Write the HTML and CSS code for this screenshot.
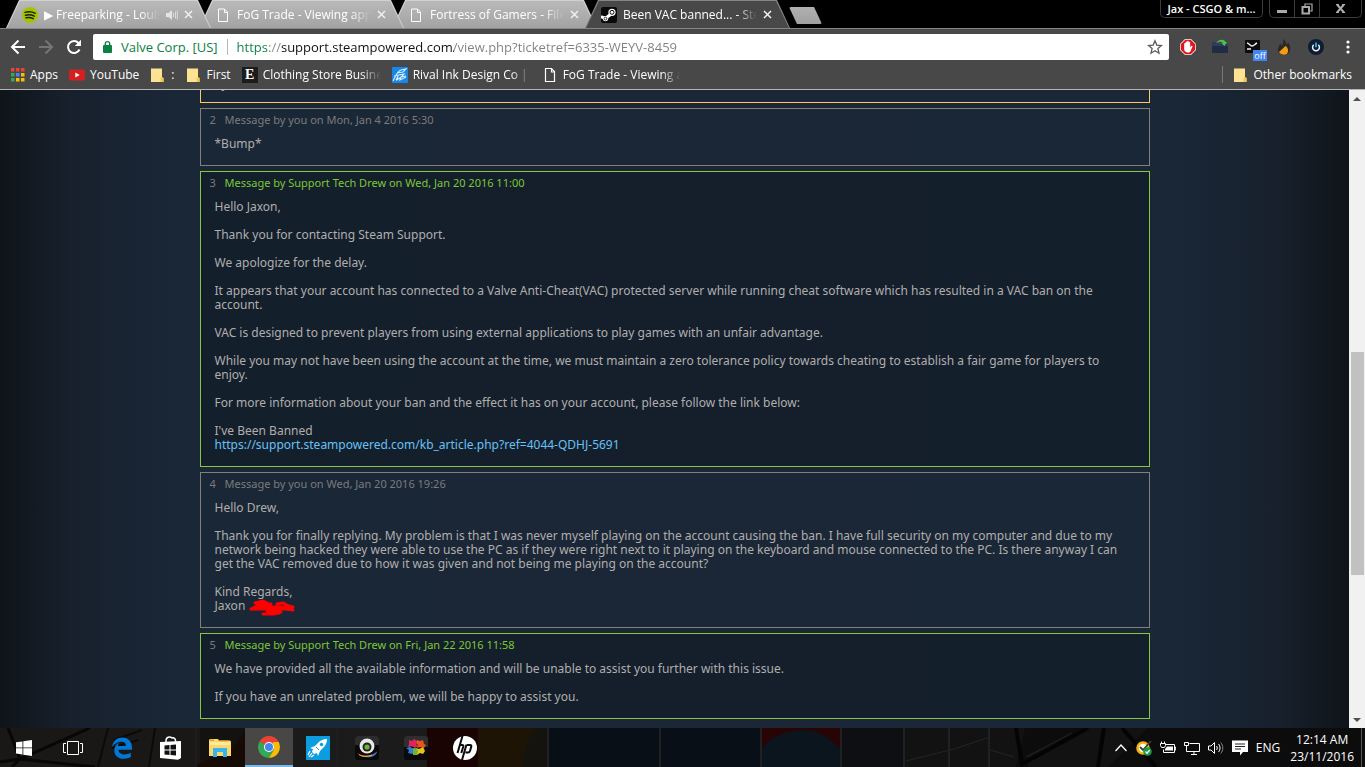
FILE: index.html
```html
<!DOCTYPE html>
<html lang="en">
<head>
    <meta charset="UTF-8">
    <meta name="viewport" content="width=device-width, initial-scale=1.0">
    <title>Been VAC banned... - Steam Support</title>
    <link rel="stylesheet" href="styles.css">
</head>
<body>
    <div class="screen">
        <header class="browser">
            <!-- Tab strip -->
            <div class="tab-strip">
                <div class="tabs">
                    <div class="tab">
                        <div class="tab-body">
                            <svg class="icon" viewBox="0 0 16 16"><circle cx="8" cy="8" r="8" fill="#a5c400"/><path d="M3 5.400c3.500-1 7.200-.7 10.200.9M3.500 8.200c3-.8 6.200-.5 8.800.9M4 10.800c2.500-.6 5-.4 7.200.8" fill="none" stroke="#1c1f05" stroke-width="1.500" stroke-linecap="round"/></svg>
                            <span class="tab-title">▶ Freeparking - Louis</span>
                            <svg class="icon-sound" viewBox="0 0 12 12"><path d="M0 4h2.500L6 1v10L2.500 8H0z" fill="#e4e4e4"/><path d="M7.500 4v4M9.500 2.500v7M11.300 1.500v9" stroke="#dcdcdc" fill="none"/></svg>
                            <button class="tab-close" aria-label="Close tab"><svg viewBox="0 0 9 9"><path d="M1 1l7 7M8 1L1 8"/></svg></button>
                        </div>
                    </div>
                    <div class="tab">
                        <div class="tab-body">
                            <svg class="icon" viewBox="0 0 16 16"><path d="M3.500 2h6l3 3v9.500h-9zM9.500 2v3.500h3" fill="none" stroke="#fff"/></svg>
                            <span class="tab-title">FoG Trade - Viewing app</span>
                            <button class="tab-close" aria-label="Close tab"><svg viewBox="0 0 9 9"><path d="M1 1l7 7M8 1L1 8"/></svg></button>
                        </div>
                    </div>
                    <div class="tab">
                        <div class="tab-body">
                            <svg class="icon" viewBox="0 0 16 16"><path d="M3.500 2h6l3 3v9.500h-9zM9.500 2v3.500h3" fill="none" stroke="#fff"/></svg>
                            <span class="tab-title">Fortress of Gamers - File</span>
                            <button class="tab-close" aria-label="Close tab"><svg viewBox="0 0 9 9"><path d="M1 1l7 7M8 1L1 8"/></svg></button>
                        </div>
                    </div>
                    <div class="tab active">
                        <div class="tab-body">
                            <svg class="icon" viewBox="0 0 16 16"><rect width="16" height="16" rx="2" fill="#0a0a0a"/><path d="M0 9.500l4.500 2L10 7" stroke="#fff" stroke-width="3" fill="none"/><circle cx="11" cy="5.300" r="3.600" fill="#fff"/><circle cx="11" cy="5.300" r="2" fill="#fff" stroke="#0a0a0a"/><circle cx="4.500" cy="11.600" r="2.700" fill="#fff"/><circle cx="4.500" cy="11.600" r="1.400" fill="none" stroke="#0a0a0a" stroke-width=".8"/></svg>
                            <span class="tab-title">Been VAC banned... - Ste</span>
                            <button class="tab-close" aria-label="Close tab"><svg viewBox="0 0 9 9"><path d="M1 1l7 7M8 1L1 8"/></svg></button>
                        </div>
                    </div>
                </div>
                <button class="new-tab" aria-label="New tab"></button>
                <div class="window-controls">
                    <button class="profile">Jax - CSGO &amp; m...</button>
                    <div class="window-buttons">
                        <button aria-label="Minimize"><svg viewBox="0 0 12 12"><path d="M1 8.500h10" stroke="#aaa" stroke-width="3"/></svg></button>
                        <button aria-label="Restore"><svg viewBox="0 0 12 12"><path d="M4 3V1h7v7H9" fill="none" stroke="#aaa" stroke-width="1.200"/><rect x="1.500" y="4" width="6.500" height="6.500" fill="none" stroke="#aaa" stroke-width="2"/></svg></button>
                        <button class="window-close" aria-label="Close"><svg viewBox="0 0 12 12"><path d="M2 1.500l7 8M9 1.500l-7 8" stroke="#aaa" stroke-width="2"/><path d="M1 1.500h3M7 1.500h3M1 9.500h3M7 9.500h3" stroke="#aaa"/></svg></button>
                    </div>
                </div>
            </div>

            <!-- Toolbar -->
            <div class="toolbar">
                <button class="nav-btn" aria-label="Back"><svg viewBox="0 0 16 16"><path d="M15 8H2.500M8.500 1.500L2 8l6.500 6.500" fill="none" stroke="#fff" stroke-width="2"/></svg></button>
                <button class="nav-btn" aria-label="Forward"><svg viewBox="0 0 16 16"><path d="M1 8h12.500M7.500 1.500L14 8l-6.500 6.500" fill="none" stroke="#757575" stroke-width="2"/></svg></button>
                <button class="nav-btn" aria-label="Reload"><svg viewBox="0 0 16 16"><path d="M13.500 10.500A6 6 0 1 1 12.500 4" fill="none" stroke="#fff" stroke-width="2"/><path d="M15 .800V7H8.800z" fill="#fff"/></svg></button>
                <div class="omnibox">
                    <svg class="icon-lock" viewBox="0 0 10 14"><rect x="0" y="5" width="9" height="8" rx="1" fill="#0b8043"/><path d="M2.300 5.500V3.800a2.200 2.200 0 0 1 4.400 0v1.700" fill="none" stroke="#0b8043" stroke-width="1.400"/></svg>
                    <label class="site-name" for="url">Valve Corp. [US]</label>
                    <input class="url" id="url" type="text" value="https://support.steampowered.com/view.php?ticketref=6335-WEYV-8459">
                    <button class="star" aria-label="Bookmark this page"><svg viewBox="0 0 16 16"><path d="M8 1.800l1.800 4.300 4.700.4-3.600 3.100 1.100 4.600L8 11.700l-4 2.500 1.100-4.600L1.500 6.500l4.700-.4z" fill="none" stroke="#5a5a5a" stroke-width="1.300"/></svg></button>
                </div>
                <div class="extensions">
                    <button class="ext" aria-label="AdBlock"><svg viewBox="0 0 16 16"><path d="M5 0h6l5 5v6l-5 5H5l-5-5V5z" fill="#f4f4f4"/><path d="M5.300.800h5.400l4.500 4.500v5.400l-4.500 4.500H5.300L.800 10.700V5.300z" fill="#e0151b"/><path d="M4.200 8V4.600a.7.700 0 0 1 1.400 0V3.200a.7.700 0 0 1 1.500 0v-.6a.8.800 0 0 1 1.600 0v1a.7.700 0 0 1 1.500 0v5l1-1.600c.6-.7 1.600-.2 1.300.6l-1.900 4.300c-.5 1-1.300 1.500-2.600 1.500-2.500 0-3.800-1.300-3.800-3.400z" fill="#fff"/></svg></button>
                    <button class="ext" aria-label="Folder sync"><svg viewBox="0 0 16 16"><path d="M0 3h6l1 2h9v9H0z" fill="#2b3c5c"/><path d="M0 7h16v7H0z" fill="#1f2c44"/><path d="M4 4.500C6 0 12-.5 13.500 3H15l-2.500 4L9.500 4h1.600C9.500 2 6.500 2.500 4 4.500z" fill="#42c94c"/></svg></button>
                    <button class="ext" aria-label="Script blocker"><svg viewBox="0 0 16 16"><rect x="1" y="1" width="15" height="13" rx="1" fill="#0c0c0c"/><path d="M3 4c2 0 3 3 5 3s3-2 5-3M3 10h4" fill="none" stroke="#f2f2f2" stroke-width="1.500"/></svg><span class="badge">off</span></button>
                    <button class="ext" aria-label="Flame"><svg viewBox="0 0 16 16"><path d="M7 0c4 2.500 2 4 4 5.500.7-.5.800-1.300.800-2.500C14 5.500 14.500 8 14 11c-.6 3-2.800 5-6 5-4 0-6.500-2.500-6-6 .3-2 1.500-3.500 2-5.500 1 .7 1.400 1.600 1.400 2.500C7.500 5 7.500 2.500 7 0z" fill="#292929"/><path d="M3 13l6.500-6c2.500 1.500 3.500 5 1.500 8-2.500 1.400-6.500 1-8-2z" fill="#f39c12"/></svg></button>
                    <button class="ext" aria-label="Power"><svg viewBox="0 0 16 16"><circle cx="8" cy="8" r="8" fill="#0f1d33"/><path d="M5.700 5.800a3.400 3.400 0 1 0 4.600 0" fill="none" stroke="#e8f1f8" stroke-width="1.500"/><path d="M8 3.500v4.800" stroke="#37b5ee" stroke-width="1.700"/></svg></button>
                    <button class="ext" aria-label="Menu"><svg viewBox="0 0 16 16" fill="#fff"><circle cx="8" cy="3" r="1.600"/><circle cx="8" cy="8" r="1.600"/><circle cx="8" cy="13" r="1.600"/></svg></button>
                </div>
            </div>

            <!-- Bookmarks bar -->
            <nav class="bookmarks">
                <a href="#"><svg class="icon" viewBox="0 0 16 16"><path d="M2 1h3.500v3.500H2zM7 1h3.500v3.500H7zM12 1h3.500v3.500H12z" fill="#ea4335"/><path d="M2 6h3.500v3.500H2z" fill="#34a853"/><path d="M7 6h3.500v3.500H7z" fill="#4285f4"/><path d="M12 6h3.500v3.500H12z" fill="#fbbc05"/><path d="M2 11h3.500v3.500H2z" fill="#34a853"/><path d="M7 11h3.500v3.500H7zM12 11h3.500v3.500H12z" fill="#fbbc05"/></svg><span>Apps</span></a>
                <a href="#"><svg class="icon" viewBox="0 0 16 16"><rect y="2.500" width="16" height="11" rx="2" fill="#d6201f"/><path d="M6.300 5.500v5l4.400-2.500z" fill="#fff"/></svg><span>YouTube</span></a>
                <a href="#"><svg class="icon" viewBox="0 0 16 16"><path d="M1 1.500h11v9l1.500.5v4H1z" fill="#fde293"/><path d="M10.500 11l1.500-1 1.500 1v4h-3z" fill="#f0c950"/></svg><span>:</span></a>
                <a href="#"><svg class="icon" viewBox="0 0 16 16"><path d="M1 1.500h11v9l1.500.5v4H1z" fill="#fde293"/><path d="M10.500 11l1.500-1 1.500 1v4h-3z" fill="#f0c950"/></svg><span>First</span></a>
                <a href="#"><span class="icon letter-icon">E</span><span class="fade">Clothing Store Busine</span></a>
                <a href="#"><svg class="icon" viewBox="0 0 16 16"><rect width="16" height="16" rx="1" fill="#1787e8"/><path d="M1 14C4 9 5 4 9 3l5-1-3 3-6 1M2 9l10-2-3 3 5-1M4 13l2-4-1 4 4-3-1 3 6-3" fill="none" stroke="#d6efff" stroke-width="1.100"/></svg><span class="fade">Rival Ink Design Co | C</span></a>
                <a href="#"><svg class="icon" viewBox="0 0 16 16"><path d="M3.500 1.500h6l3 3v10h-9zM9.500 1.500V5h3" fill="none" stroke="#fff" stroke-width="1.200"/></svg><span class="fade">FoG Trade - Viewing a</span></a>
                <a class="other" href="#"><svg class="icon" viewBox="0 0 16 16"><path d="M2 1.500h11v9l1.500.5v4H2z" fill="#fde293"/><path d="M11.500 11l1.500-1 1.500 1v4h-3z" fill="#f0c950"/></svg><span>Other bookmarks</span></a>
            </nav>
        </header>

        <div class="viewport">
            <main class="page">
                <div class="messages">
                    <article class="message first">
                        <p>y</p>
                    </article>
                    <article class="message">
                        <h2><span class="num">2</span>Message by you on Mon, Jan 4 2016 5:30</h2>
                        <p>*Bump*</p>
                    </article>
                    <article class="message support">
                        <h2><span class="num">3</span>Message by Support Tech Drew on Wed, Jan 20 2016 11:00</h2>
                        <p>Hello Jaxon,</p>
                        <p>Thank you for contacting Steam Support.</p>
                        <p>We apologize for the delay.</p>
                        <p>It appears that your account has connected to a Valve Anti-Cheat(VAC) protected server while running cheat software which has resulted in a VAC ban on the account.</p>
                        <p>VAC is designed to prevent players from using external applications to play games with an unfair advantage.</p>
                        <p>While you may not have been using the account at the time, we must maintain a zero tolerance policy towards cheating to establish a fair game for players to enjoy.</p>
                        <p>For more information about your ban and the effect it has on your account, please follow the link below:</p>
                        <p>I've Been Banned<br><a href="#">https://support.steampowered.com/kb_article.php?ref=4044-QDHJ-5691</a></p>
                    </article>
                    <article class="message">
                        <h2><span class="num">4</span>Message by you on Wed, Jan 20 2016 19:26</h2>
                        <p>Hello Drew,</p>
                        <p>Thank you for finally replying. My problem is that I was never myself playing on the account causing the ban. I have full security on my computer and due to my network being hacked they were able to use the PC as if they were right next to it playing on the keyboard and mouse connected to the PC. Is there anyway I can get the VAC removed due to how it was given and not being me playing on the account?</p>
                        <p>Kind Regards,<br>Jaxon <svg class="scribble" viewBox="0 0 46 18"><path d="M2 10L8 7M3 10h16M6 4l8-2 4 2M8 5h14M10 8h14M14 10h28M28 5l6-1 6 3 4 1M24 8h18M14 15l10 0 6-1M18 12l14 1M30 9l14 2" fill="none" stroke="#f00" stroke-width="3" stroke-linecap="round" stroke-linejoin="round"/></svg></p>
                    </article>
                    <article class="message support">
                        <h2><span class="num">5</span>Message by Support Tech Drew on Fri, Jan 22 2016 11:58</h2>
                        <p>We have provided all the available information and will be unable to assist you further with this issue.</p>
                        <p>If you have an unrelated problem, we will be happy to assist you.</p>
                    </article>
                </div>
            </main>
            <div class="scrollbar">
                <svg viewBox="0 0 16 17"><path d="M4 11l4-4 4 4z" fill="#505050"/></svg>
                <div class="track"><div class="thumb"></div></div>
                <svg viewBox="0 0 16 17"><path d="M4 7l4 4 4-4z" fill="#505050"/></svg>
            </div>
        </div>

        <!-- Taskbar -->
        <footer class="taskbar">
            <svg class="wallpaper" viewBox="0 0 1365 39" preserveAspectRatio="none">
                <path d="M0 0h1365v39H0z" fill="#0c0c0d"/>
                <path d="M0 0h200v39H0z" fill="#191817"/>
                <path d="M200 0h45v39h-45z" fill="#141211"/>
                <path d="M245 0h182v39H245z" fill="#1c1b1b"/>
                <path d="M196 39c6-8 20-7 32-15 8-6 12-14 17-20v35z" fill="#160a04"/>
                <path d="M427 0h51v39h-51z" fill="#190403"/>
                <path d="M478 0h70v39h-70z" fill="#1e1406"/>
                <path d="M522 39c2-16 5-30 14-39h12v39z" fill="#15130d"/>
                <path d="M548 0h213v39H548z" fill="#080f16"/>
                <path d="M761 0h80v39h-80z" fill="#280504"/>
                <path d="M761 22c8-12 20-18 40-20 20 0 28 8 40 20v17h-80z" fill="#0a151e"/>
                <path d="M841 0h64v39h-64z" fill="#0d0f12"/>
                <path d="M905 0h120l-9 39H905zM1028 27l60-27h60l-40 39h-80z" fill="#121213"/>
                <path d="M0 34l20-3L90 0M20 31l75 8M20 31L8 0M20 31l-8 8" fill="none" stroke="#080706" stroke-width="3"/>
                <path d="M98 39L108 0M114 12l28-10M112 20l26-8M155 0l-6 39" fill="none" stroke="#0b0a0a" stroke-width="2"/>
                <path d="M1016 0l6 36 66-36M1104 0l-6 39M1122 0l34 39" fill="none" stroke="#040404" stroke-width="4"/>
                <path d="M1026 29l46-24M990 22l24 7M906 33l48-12 36-12" fill="none" stroke="#232424"/>
                <path d="M548 0v39M660 0v39M761 0v39M841 0v39M904 0v39M949 0v39M989 0v39" stroke="#202122" stroke-width="2"/>
                <path d="M196 0v39M337 0v39" stroke="#26201c"/>
            </svg>
            <button class="task" aria-label="Start"><svg width="16" height="16" viewBox="0 0 16 16"><path d="M0 2.300l6.500-.9v6.100H0zM7.300 1.300L16 0v7.500H7.300zM0 8.300h6.500v6.100L0 13.600zM7.300 8.300H16v7.600l-8.700-1.200z" fill="#fff"/></svg></button>
            <button class="task" aria-label="Task view"><svg width="20" height="16" viewBox="0 0 20 16"><path d="M4.500 1.500h11v13h-11zM3 3.500H.500v9H3M17 3.500h2.500v9H17" fill="none" stroke="#fff"/></svg></button>
            <button class="task" aria-label="Edge"><svg width="22" height="22" viewBox="0 0 22 22"><path d="M1 10C2 3.500 6.500.500 11.500.500 17.500.500 21 5 21 10.500v2.300H7.500c.2 3.300 3 4.700 6 4.700 2.300 0 4.400-.6 6.300-1.700v4.300c-2 1.100-4.500 1.700-7.200 1.700C7 21.800 3.300 18.600 3.300 13.500 3.300 9.800 5.200 7.300 8.300 5.500c-.8 1-1.200 2.200-1.400 3.600h8c0-3-1.600-4.300-4.400-4.300C6.800 4.800 3 6.800 1 10z" fill="#0078d7"/></svg></button>
            <button class="task" aria-label="Store"><svg width="22" height="24" viewBox="0 0 22 24"><path d="M6 6V4.500C6 1 10 0 12 2c2-.5 3.500.5 3.500 2.500V6" fill="none" stroke="#fff" stroke-width="1.500"/><path d="M0 6l21-1v17l-3 1.800L0 22z" fill="#fff"/><path d="M4.500 9.500l5-.5v4.500h-5zM10.500 9l5.500-.5v5h-5.500zM4.500 14.500h5V19l-5-.5zM10.500 14.500H16v5l-5.500-.5z" fill="#111"/></svg></button>
            <button class="task" aria-label="File Explorer"><svg width="22" height="20" viewBox="0 0 22 20"><path d="M0 2l1-1h8l1 1.500h11l1 1V18H0z" fill="#ffd767"/><path d="M1 4h20v3H1z" fill="#ffe9a0"/><path d="M1 1.500h4v1.500H1zM11 2.500h8v1h-8z" fill="#e0a52c"/><path d="M4 19v-9h14v9h-4v-5H8v5z" fill="#35b5ef"/></svg></button>
            <button class="task running" aria-label="Chrome"><svg width="22" height="22" viewBox="0 0 22 22"><path d="M11 11L1.500 5.500A11 11 0 0 1 20.500 5.500z" fill="#ea4335"/><path d="M11 11L1.500 5.500A11 11 0 0 0 11 22l4.800-8.300z" fill="#34a853"/><path d="M20.700 6A11 11 0 0 1 11 22l4.800-8.300L15 6z" fill="#fbbc05"/><circle cx="11" cy="11" r="5" fill="#fff"/><circle cx="11" cy="11" r="4" fill="#4285f4"/></svg></button>
            <button class="task" aria-label="Rocket"><svg width="24" height="24" viewBox="0 0 24 24"><path d="M0 0h24v24H0z" fill="#0c9de0"/><path d="M21 3c-4 .2-7 1.500-9.500 4.500L9 10l-5 2 3 1-1 3 2 2 3-1 1 3 2-5 2.500-2.500C19.500 10 21 7 21 3z" fill="#fff"/><circle cx="15.500" cy="8.500" r="1.700" fill="#0c9de0"/><path d="M10 11l3 3" stroke="#0c9de0"/><path d="M6 17l-3 4M8 19l-3 2M4 15l-2 4" stroke="#fff" stroke-width="1.200"/></svg></button>
            <button class="task" aria-label="Webcam"><svg width="24" height="24" viewBox="0 0 24 24"><rect width="24" height="24" rx="3" fill="#0a0a0a"/><path d="M0 3a3 3 0 0 1 3-3h18a3 3 0 0 1 3 3v6H0z" fill="#2c2c2c"/><path d="M2 16.500c4 4 15 4 20-1-2 7-16 7.500-20 1z" fill="#f03a2a"/><path d="M7 20c5 .5 11 0 15-4.500-1 5-8 7.500-15 4.500z" fill="#2f7be0"/><path d="M4 18.500c3 2.500 9 2.500 13 .5" stroke="#e8c02a" fill="none"/><circle cx="12" cy="10" r="7.500" fill="#e8e8e8"/><circle cx="12" cy="11" r="4.500" fill="#222"/><circle cx="12" cy="11" r="2.600" fill="#6bb52f"/></svg></button>
            <button class="task" aria-label="Puzzle"><svg width="24" height="24" viewBox="0 0 24 24"><rect width="24" height="24" rx="3" fill="#0a0a0a"/><path d="M0 3a3 3 0 0 1 3-3h18a3 3 0 0 1 3 3v8H0z" fill="#2e2e2e"/><path d="M5 4l3 1 2-2 3 2-1 3 2 2-3 2-3-2-4 1 1-3z" fill="#e0245e"/><path d="M13 4l3 1 3-1 1 4 2 1-2 3-4-1-3 1 1-3-2-2z" fill="#e8541e"/><path d="M2 12l4-1 2 1 3 0 0 4-3 2-4-1 1-3z" fill="#2b7fd6"/><path d="M12 12l3 1 4-2 2 4-2 3-3-1-3 2-1-4z" fill="#e3c51c"/><path d="M9 13l3-1 2 3-1 4-4 0z" fill="#72b52c"/></svg></button>
            <button class="task" aria-label="HP"><svg width="24" height="24" viewBox="0 0 24 24"><circle cx="12" cy="12" r="12" fill="#fff"/><path d="M9.500 0L4.500 17M6.800 9H9c1.500 0 1.500.7 1.200 1.800L8.300 17M13.500 8.500L9 24M14 9h3c1.500 0 1.500.8 1.200 1.900l-1.200 4c-.4 1.200-.8 1.600-2 1.600h-2.500" fill="none" stroke="#0b0b0b" stroke-width="2"/></svg></button>

            <div class="tray">
                <button aria-label="Show hidden icons"><svg width="14" height="16" viewBox="0 0 14 16"><path d="M1.500 11L7 5l5.500 6" fill="none" stroke="#fff" stroke-width="1.300"/></svg></button>
                <button aria-label="Norton"><svg width="16" height="16" viewBox="0 0 16 16"><circle cx="7" cy="8" r="5.500" fill="#fff" stroke="#f7b50c" stroke-width="2.600"/><path d="M4 7l3 3 8-9" stroke="#3d3d2a" stroke-width="1.800" fill="none"/><circle cx="11.500" cy="11.500" r="4.300" fill="#159a45"/><path d="M9.500 11.500l1.500 1.700 2.700-3.200" fill="none" stroke="#fff" stroke-width="1.300"/></svg></button>
                <button aria-label="Power"><svg width="16" height="16" viewBox="0 0 16 16"><path d="M5.500 4.500h9v8h-11v-3M14.500 7h1.200v3h-1.200M1.500 1.500v2M4.500 1.500v2M.500 3.500h5v2l-1 2h-3l-1-2z" fill="none" stroke="#fff"/><path d="M7 6.500h6v4H5V9z" fill="#fff"/></svg></button>
                <button aria-label="Network"><svg width="16" height="16" viewBox="0 0 16 16"><path d="M5.500 3.500h10v8H4M10 11.500v3M7 14.500h6M.500 2.500h4v3h-4zM2.500 5.500v6h3" fill="none" stroke="#fff"/></svg></button>
                <button aria-label="Volume"><svg width="16" height="16" viewBox="0 0 16 16"><path d="M.500 6h2.500l3.500-3.500v11L3 10H.500z" fill="none" stroke="#fff"/><path d="M8.500 6c1 1.200 1 2.800 0 4M10.500 4c2 2.200 2 5.800 0 8" fill="none" stroke="#fff"/><path d="M12.700 2.500c2.800 3 2.800 8 0 11" fill="none" stroke="#888"/></svg></button>
                <button aria-label="Action center"><svg width="16" height="16" viewBox="0 0 16 16"><path d="M0 .500h16V12h-5l-3 3.500V12H0z" fill="#fff"/><path d="M3 4h10M3 6.500h10M3 9h6" stroke="#222"/></svg></button>
                <button class="lang">ENG</button>
                <button class="clock"><time>12:14 AM</time><time>23/11/2016</time></button>
            </div>
        </footer>
    </div>
</body>
</html>
```
FILE: styles.css
```css
* {
    margin: 0;
    padding: 0;
    box-sizing: border-box;
}

body {
    font-family: 'Open Sans', 'Noto Sans', sans-serif;
    font-size: 12px;
    background: #000;
    color: #fff;
}

button {
    background: none;
    border: none;
    color: inherit;
    font: inherit;
}

a {
    color: inherit;
    text-decoration: none;
}

svg {
    display: block;
    flex: none;
}

.screen {
    display: flex;
    flex-direction: column;
    height: 100vh;
    overflow: hidden;
}

.icon {
    width: 16px;
    height: 16px;
    flex: none;
}

/* Tab strip */
.tab-strip {
    display: flex;
    align-items: flex-start;
    height: 28px;
    padding-left: 6px;
    background: #000;
}

.tabs {
    display: flex;
}

.tab {
    position: relative;
    width: 205px;
    height: 28px;
    margin-right: -12px;
    padding: 1px 1px 0;
    background: #d0d0d0;
    clip-path: polygon(0 100%, 13px 0, calc(100% - 13px) 0, 100% 100%);
}

.tab:nth-child(1) {
    z-index: 3;
}

.tab:nth-child(2) {
    z-index: 2;
}

.tab.active {
    z-index: 4;
    margin-right: 0;
    background: #858585;
}

.tab-body {
    display: flex;
    align-items: center;
    height: 27px;
    padding: 0 15px;
    background: linear-gradient(#b9b9b9, #a3a3a3);
    clip-path: polygon(0 100%, 13px 0, calc(100% - 13px) 0, 100% 100%);
}

.active .tab-body {
    background: #484848;
}

.tab-title {
    flex: 1;
    margin-left: 6px;
    overflow: hidden;
    white-space: nowrap;
    -webkit-mask-image: linear-gradient(to right, #000 calc(100% - 20px), transparent);
    mask-image: linear-gradient(to right, #000 calc(100% - 20px), transparent);
}

.icon-sound {
    width: 12px;
    height: 12px;
    margin-left: 5px;
}

.tab-close {
    margin-left: 4px;
    padding: 0 2px;
}

.tab-close svg {
    width: 9px;
    height: 9px;
    fill: none;
    stroke: #f0f0f0;
    stroke-width: 1.5;
}

.new-tab {
    width: 33px;
    height: 17px;
    margin-top: 7px;
    margin-left: -1px;
    background: linear-gradient(#b0b0b0, #a0a0a0);
    border-radius: 2px;
    clip-path: polygon(0 0, 25px 0, 100% 100%, 8px 100%);
}

.window-controls {
    display: flex;
    gap: 6px;
    margin-left: auto;
    padding-right: 3px;
}

.profile {
    width: 103px;
    height: 18px;
    border: 1px solid #3c3c3c;
    border-top: none;
    border-radius: 0 0 5px 5px;
    font-size: 11px;
    font-weight: 600;
    line-height: 16px;
}

.window-buttons {
    display: flex;
    height: 18px;
    border: 1px solid #3c3c3c;
    border-top: none;
    border-radius: 0 0 5px 5px;
}

.window-buttons button {
    display: flex;
    align-items: center;
    justify-content: center;
    width: 25px;
    border-right: 1px solid #3c3c3c;
}

.window-buttons .window-close {
    width: 41px;
    border-right: none;
}

.window-buttons svg {
    width: 12px;
    height: 12px;
}

/* Toolbar */
.toolbar {
    display: flex;
    align-items: center;
    height: 37px;
    padding: 0 1px 0 4px;
    background: #484848;
    border-top: 1px solid #858585;
}

.nav-btn {
    display: flex;
    justify-content: center;
    width: 28px;
}

.nav-btn svg {
    width: 16px;
    height: 16px;
}

.omnibox {
    display: flex;
    flex: 1;
    align-items: center;
    height: 26px;
    margin: 0 3px 0 5px;
    padding: 0 6px 0 10px;
    background: #fff;
    border-radius: 2px;
    font-size: 13px;
}

.icon-lock {
    width: 10px;
    height: 14px;
}

.site-name {
    margin-left: 8px;
    padding-right: 9px;
    border-right: 1px solid #b5b5b5;
    color: #0b8043;
    line-height: 16px;
}

.url {
    flex: 1;
    min-width: 0;
    margin-left: 9px;
    border: none;
    outline: none;
    font: inherit;
    background: linear-gradient(to right, #0b8043 32px, #888 32px 44px, #111 44px 217px, #808080 217px);
    -webkit-background-clip: text;
    background-clip: text;
    color: transparent;
}

.star svg {
    width: 16px;
    height: 16px;
}

.extensions {
    display: flex;
}

.ext {
    position: relative;
    display: flex;
    justify-content: center;
    width: 32px;
}

.ext svg {
    width: 16px;
    height: 16px;
}

.badge {
    position: absolute;
    top: 11px;
    right: 1px;
    width: 14px;
    background: #4285f4;
    font-size: 9px;
    line-height: 11px;
}

/* Bookmarks bar */
.bookmarks {
    display: flex;
    align-items: center;
    gap: 11px;
    height: 25px;
    padding: 0 13px 5px 9px;
    background: #484848;
    border-bottom: 1px solid #b4b4b4;
}

.bookmarks a {
    display: flex;
    align-items: center;
    gap: 5px;
    white-space: nowrap;
}

.letter-icon {
    background: #1c1c1c;
    font-family: 'Liberation Serif', serif;
    font-size: 14px;
    font-weight: bold;
    line-height: 16px;
    text-align: center;
}

.fade {
    width: 118px;
    overflow: hidden;
    -webkit-mask-image: linear-gradient(to right, #000 98px, transparent);
    mask-image: linear-gradient(to right, #000 98px, transparent);
}

.bookmarks .other {
    margin-left: auto;
    padding-left: 9px;
    border-left: 1px solid #777;
}

/* Support page */
.viewport {
    display: flex;
    flex: 1;
    min-height: 0;
}

.page {
    display: flex;
    flex: 1;
    flex-direction: column;
    justify-content: flex-end;
    align-items: center;
    overflow: hidden;
    padding-bottom: 9px;
    background: linear-gradient(to right, #0f141a, #17202c 70px, #1a2737 170px, #1b2737 50%, #1a2737 calc(100% - 170px), #17202c calc(100% - 70px), #0f141a);
    font-family: 'Noto Sans', sans-serif;
}

.messages {
    display: flex;
    flex-direction: column;
    gap: 5px;
    width: 100%;
    max-width: 950px;
}

.message {
    padding: 4px 14px 14px;
    border: 1px solid #808080;
    color: #b0aeac;
    font-size: 12px;
    line-height: 14px;
}

.message.first {
    padding: 4px 21px 11px;
    border-color: #ffc861;
}

.message.support {
    border-color: #8bc53f;
    background: rgba(0, 0, 0, 0.2);
}

.message h2 {
    margin: 0 -5px 10px;
    color: #7b7b7b;
    font-size: 11px;
    font-weight: normal;
}

.message.support h2 {
    color: #7cc736;
}

.message .num {
    display: inline-block;
    width: 15px;
    color: #7b7b7b;
}

.message p + p {
    margin-top: 14px;
}

.message a {
    color: #67c1f5;
}

.scribble {
    display: inline-block;
    width: 46px;
    height: 18px;
    margin: 0 0 -4px 1px;
    vertical-align: top;
}

.scrollbar {
    display: flex;
    flex-direction: column;
    width: 16px;
    background: #f1f1f1;
}

.track {
    display: flex;
    flex: 1;
    flex-direction: column;
    padding: 0 1px 0 2px;
}

.track::before {
    content: '';
    flex: 245;
}

.track::after {
    content: '';
    flex: 136;
}

.thumb {
    flex: 223;
    background: #c1c1c1;
}

/* Taskbar */
.taskbar {
    position: relative;
    z-index: 0;
    display: flex;
    gap: 1px;
    height: 39px;
    background: #0c0c0d;
}

.wallpaper {
    position: absolute;
    inset: 0;
    z-index: -1;
    width: 100%;
    height: 100%;
}

.task {
    display: flex;
    align-items: center;
    justify-content: center;
    width: 48px;
}

.task.running {
    background: #484746;
    border-bottom: 2px solid #76b9ed;
}

.tray {
    display: flex;
    align-items: center;
    gap: 8px;
    margin-left: auto;
    padding-right: 3px;
}

.clock {
    height: 39px;
    margin-left: 2px;
    padding-right: 7px;
    border-right: 1px solid #555;
}

.clock time {
    display: block;
    line-height: 17px;
}
```
